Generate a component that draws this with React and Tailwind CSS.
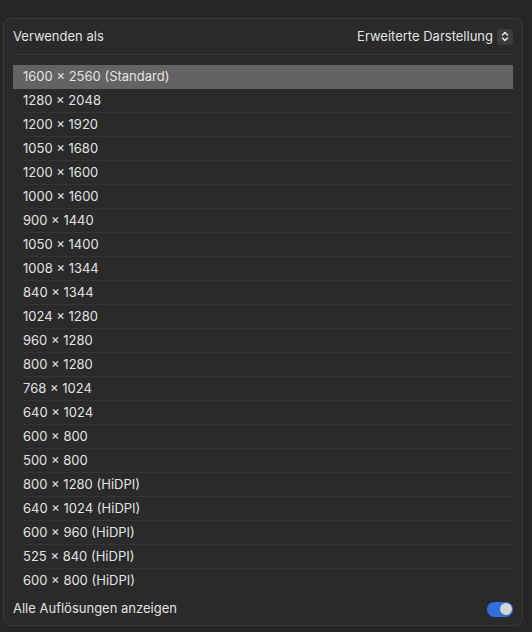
import React, { useState } from "react";

const resolutions = [
  "1600 × 2560 (Standard)",
  "1280 × 2048",
  "1200 × 1920",
  "1050 × 1680",
  "1200 × 1600",
  "1000 × 1600",
  "900 × 1440",
  "1050 × 1400",
  "1008 × 1344",
  "840 × 1344",
  "1024 × 1280",
  "960 × 1280",
  "800 × 1280",
  "768 × 1024",
  "640 × 1024",
  "600 × 800",
  "500 × 800",
  "800 × 1280 (HiDPI)",
  "640 × 1024 (HiDPI)",
  "600 × 960 (HiDPI)",
  "525 × 840 (HiDPI)",
  "600 × 800 (HiDPI)",
];

const App = () => {
  const [selected, setSelected] = useState(0);
  const [showAll, setShowAll] = useState(true);

  return (
    <div
      className="w-[532px] h-[632px] bg-[#262626] pt-[18px] pl-[3px] text-[13px] text-[#e2e2e2]"
      style={{ fontFamily: "Inter, 'Noto Sans', sans-serif" }}
    >
      <div className="w-[520px] h-[608px] rounded-[8px] border border-[#3b3b3b] bg-[#2a2a2a] px-[9px] flex flex-col">
        {/* Header */}
        <div className="h-[36px] flex items-center justify-between border-b border-[#363636]">
          <span>Verwenden als</span>
          <div className="flex items-center gap-[4px]">
            <span>Erweiterte Darstellung</span>
            <div className="w-[16px] h-[16px] rounded-[4px] bg-[#3c3c3c] flex items-center justify-center">
              <svg width="8" height="11" viewBox="0 0 8 11" fill="none" stroke="#e6e6e6" strokeWidth="1.5" strokeLinecap="round" strokeLinejoin="round">
                <path d="M1.5 4 L4 1.5 L6.5 4" />
                <path d="M1.5 7 L4 9.5 L6.5 7" />
              </svg>
            </div>
          </div>
        </div>

        {/* List */}
        <div className="mt-[10px] flex flex-col">
          {resolutions.map((r, i) => (
            <div
              key={r}
              onClick={() => setSelected(i)}
              className={`h-[24px] ${selected === i ? "bg-[#636363]" : ""}`}
            >
              <div
                className={`h-full ml-[10px] flex items-center ${
                  i < resolutions.length - 1 && selected !== i && selected !== i + 1 ? "border-b border-[#353535]" : ""
                }`}
              >
                {r}
              </div>
            </div>
          ))}
        </div>

        {/* Footer */}
        <div className="flex-1 flex items-center justify-between">
          <span>Alle Auflösungen anzeigen</span>
          <button
            onClick={() => setShowAll(!showAll)}
            className={`w-[26px] h-[15px] rounded-full p-[1.5px] flex items-center ${
              showAll ? "bg-[#2f6fde] justify-end" : "bg-[#4a4a4a] justify-start"
            }`}
          >
            <span className="w-[12px] h-[12px] rounded-full bg-[#d4d4d4]" />
          </button>
        </div>
      </div>
    </div>
  );
};

export default App;
